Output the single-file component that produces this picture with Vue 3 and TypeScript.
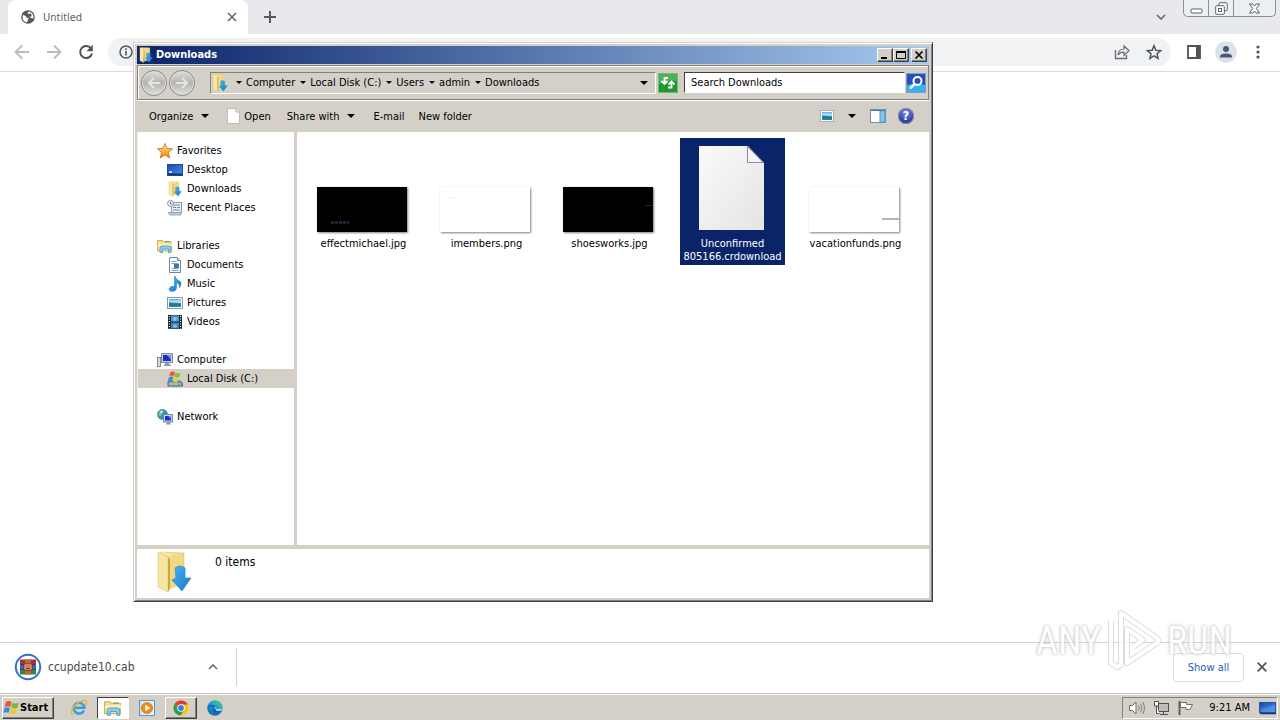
<script setup lang="ts">
interface NavItem { label: string; icon: string; active?: boolean }
interface NavGroup extends NavItem { children: NavItem[] }
interface FileItem { name: string; kind: 'dark-text' | 'light-text' | 'dark-mark' | 'document' | 'light-line'; selected?: boolean }

const crumbs: string[] = ['Computer', 'Local Disk (C:)', 'Users', 'admin', 'Downloads']

const groups: NavGroup[] = [
  {
    label: 'Favorites', icon: 'star',
    children: [
      { label: 'Desktop', icon: 'desktop' },
      { label: 'Downloads', icon: 'downloads' },
      { label: 'Recent Places', icon: 'recent' },
    ],
  },
  {
    label: 'Libraries', icon: 'libraries',
    children: [
      { label: 'Documents', icon: 'documents' },
      { label: 'Music', icon: 'music' },
      { label: 'Pictures', icon: 'pictures' },
      { label: 'Videos', icon: 'videos' },
    ],
  },
  { label: 'Computer', icon: 'computer', children: [{ label: 'Local Disk (C:)', icon: 'disk', active: true }] },
  { label: 'Network', icon: 'network', children: [] },
]

const files: FileItem[] = [
  { name: 'effectmichael.jpg', kind: 'dark-text' },
  { name: 'imembers.png', kind: 'light-text' },
  { name: 'shoesworks.jpg', kind: 'dark-mark' },
  { name: 'Unconfirmed 805166.crdownload', kind: 'document', selected: true },
  { name: 'vacationfunds.png', kind: 'light-line' },
]
</script>

<template>
  <div class="screen">
    <svg class="sprite" aria-hidden="true">
      <defs>
        <linearGradient id="gFold" x1="0" y1="0" x2="1" y2="1"><stop offset="0" stop-color="#fbf0b4" /><stop offset="1" stop-color="#e2bf58" /></linearGradient>
        <linearGradient id="gArrow" x1="0" y1="0" x2="1" y2="1"><stop offset="0" stop-color="#48b4f0" /><stop offset="1" stop-color="#1478c8" /></linearGradient>
        <linearGradient id="gScreen" x1="0" y1="0" x2="1" y2="1"><stop offset="0" stop-color="#1848b0" /><stop offset="1" stop-color="#4890e8" /></linearGradient>
        <linearGradient id="gStar" x1="0" y1="0" x2="0" y2="1"><stop offset="0" stop-color="#fff080" /><stop offset="1" stop-color="#f08010" /></linearGradient>
        <linearGradient id="gPage" x1="0" y1="0" x2="1" y2="1"><stop offset="0" stop-color="#fafafa" /><stop offset="1" stop-color="#e4e4e4" /></linearGradient>
        <linearGradient id="gSky" x1="0" y1="0" x2="0" y2="1"><stop offset="0" stop-color="#58b0e8" /><stop offset="0.4" stop-color="#d0ecf8" /><stop offset="0.6" stop-color="#187088" /><stop offset="1" stop-color="#40a0c0" /></linearGradient>
        <linearGradient id="gEdge" x1="0" y1="1" x2="1" y2="0"><stop offset="0" stop-color="#0c59a4" /><stop offset="0.5" stop-color="#1b9de2" /><stop offset="1" stop-color="#58d068" /></linearGradient>
      </defs>
      <symbol id="i-downloads" viewBox="0 0 36 42">
        <path d="M4 1 L28 2 V33 L14 37 Z" fill="url(#gFold)" stroke="#dcc06a" stroke-width=".6" />
        <path d="M14 5 L27 3 V33 L14 38Z" fill="#efd983" />
        <path d="M2 1 L12 6 V41 L2 36Z" fill="#f7e7a2" stroke="#dcc06a" stroke-width=".6" />
        <path d="M12 6 L14 8 V38 L12 41Z" fill="#c9a548" />
        <path d="M19 17 Q24 13 29 17 V27 H35 L26 40 L16 29 L20 27Z" fill="url(#gArrow)" stroke="#3b8fcc" stroke-width=".8" />
      </symbol>
      <symbol id="i-star" viewBox="0 0 16 16">
        <path d="M8 .5 L10 5.4 L15.6 5.8 L11.4 9.4 L12.8 15 L8 12 L3.2 15 L4.6 9.4 L.4 5.8 L6 5.4Z" fill="url(#gStar)" stroke="#d8761c" stroke-width=".9" />
      </symbol>
      <symbol id="i-desktop" viewBox="0 0 16 16">
        <rect x=".5" y="2.5" width="15" height="11" fill="url(#gScreen)" stroke="#20489c" /><rect x="1" y="11.5" width="14" height="1.6" fill="#183070" /><rect x="2" y="9" width="3" height="2" fill="#b8d8f8" />
      </symbol>
      <symbol id="i-recent" viewBox="0 0 16 16">
        <rect x="4.500" y="2.500" width="10" height="10" fill="#eef2f6" stroke="#8796a5" /><path d="M6 5h7M6 7.500h3m1 0h3M6 10h7" stroke="#5f88b0" /><circle cx="3.500" cy="3.500" r="3" fill="#eef3f7" stroke="#8794a0" /><path d="M3.500 2v2h1.500" stroke="#456" fill="none" stroke-width=".8" /><path d="M1 12.500h13v2.500H3z" fill="#c5ced6" stroke="#8896a3" stroke-width=".8" />
      </symbol>
      <symbol id="i-libraries" viewBox="0 0 16 16">
        <path d="M.5 2.500h5l1 1.500h8v9h-14z" fill="#f4df8d" stroke="#d2b254" /><path d="M1 5.500h14v3H1z" fill="#fbf1bd" /><path d="M8 3h5v1H8z" fill="#58b060" /><path d="M3 14.500V10q0-2 2-2h7q2 0 2 2v4.500h-2.500V11h-6v3.500z" fill="#8ed0f0" stroke="#4496cc" stroke-width=".8" />
      </symbol>
      <symbol id="i-documents" viewBox="0 0 16 16">
        <path d="M2.500.5h8l3 3v12h-11z" fill="#fff" stroke="#72869b" /><path d="M10.500.5v3h3" fill="#dbe4ed" stroke="#72869b" /><path d="M4.500 4.500h5M4.500 6.500h7M4.500 11.500h7M4.500 13.500h7" stroke="#7ca3c9" /><rect x="7" y="7" width="5" height="4" fill="#3b79b4" />
      </symbol>
      <symbol id="i-music" viewBox="0 0 16 16">
        <path d="M8 0 Q9 4 13.500 5.500 Q15 8 12.500 12 Q13 8 9.500 6.500 V12 Q9 15.500 5 15.500 Q1.500 15 2 12.500 Q3.500 9.500 7.500 10.500 V0Z" fill="url(#gArrow)" stroke="#2474b2" stroke-width=".5" />
      </symbol>
      <symbol id="i-pictures" viewBox="0 0 16 16">
        <rect x=".5" y="2.500" width="15" height="11" fill="#fff" stroke="#839db0" /><rect x="2" y="4" width="12" height="8" fill="url(#gSky)" /><path d="M2 7q6 0 12 3v2H2z" fill="#1f7c92" opacity=".6" />
      </symbol>
      <symbol id="i-videos" viewBox="0 0 16 16">
        <rect x="1" y="1" width="14" height="14" fill="#1e2930" /><rect x="4" y="1.500" width="8" height="6" fill="#4f94cd" /><rect x="4" y="8.500" width="8" height="6" fill="#3b82c0" /><path d="M2.500 2v13M13.500 2v13" stroke="#eee" stroke-width="1.200" stroke-dasharray="1 1.500" /><circle cx="8" cy="5" r="2" fill="#8bc3e9" /><circle cx="8" cy="12" r="2" fill="#80b8e1" />
      </symbol>
      <symbol id="i-computer" viewBox="0 0 16 16">
        <rect x="4.500" y="1.500" width="11" height="9" fill="#c8ccd6" stroke="#878ca0" /><rect x="6" y="3" width="8" height="6" fill="#1830c8" /><path d="M10 3h4v5z" fill="#6c8ef4" /><path d="M8 11h4v1.500h2V14H7v-1.500h1z" fill="#9298a8" /><rect x=".5" y="5.500" width="3" height="9" fill="#d8dae0" stroke="#858a96" />
      </symbol>
      <symbol id="i-disk" viewBox="0 0 16 16">
        <path d="M1 10h12l2.500 2v3H1z" fill="#829eaa" stroke="#536e79" /><path d="M2 13h9" stroke="#bfe5e2" /><rect x="12" y="12.500" width="2" height="1.500" fill="#65e073" /><path d="M3.500 1q3-1 4.500.5L6.500 5.500Q5 4 2 5z" fill="#ee5928" /><path d="M8.500 1.500q2 1.500 5 .500l-1.200 4q-3 1-5-.500z" fill="#7fc13c" /><path d="M2 6q2.500-1 4.300.3l-1.200 4q-2-1.500-4.300-.5z" fill="#348dd8" /><path d="M7 6.500q2 1.500 5 .500l-1.200 3.500q-3 1-5-.300z" fill="#fbc929" />
      </symbol>
      <symbol id="i-network" viewBox="0 0 16 16">
        <circle cx="5.500" cy="5.500" r="5" fill="#2e93bd" stroke="#1f6f8d" stroke-width=".6" /><path d="M2 3q3-3 5-1L5 5 3 8 1 6zM7 6l3-1-1 4z" fill="#6bc979" /><path d="M3 2l3 0-2 3z" fill="#d8f4ec" /><rect x="6.500" y="5.500" width="9" height="7.500" fill="#ccd3e4" stroke="#7e87a6" /><rect x="8" y="7" width="6" height="4.500" fill="#1a30cc" /><path d="M11 7h3v3z" fill="#6c8ef4" /><path d="M10 13h3l1 2.500H9z" fill="#8f96ac" />
      </symbol>
      <symbol id="i-monitor" viewBox="0 0 18 16">
        <rect x=".5" y="2.500" width="16" height="10" fill="url(#gScreen)" stroke="#2656a8" /><path d="M1 13.500h16" stroke="#183468" stroke-width="1.500" /><path d="M2 9l14-4v7H2z" fill="#5da2ee" opacity=".5" />
      </symbol>
    </svg>

    <header class="tabstrip">
      <div class="tab">
        <svg class="globe" viewBox="0 0 14 14"><circle cx="7" cy="7" r="6.800" fill="#54585c" /><path d="M2 5q2 0 3 1.500t2 1.500q1 .5 0 2T6 12.500Q1.500 11.500 1.500 7zM8 1.500q-2 1-1 2t2 0 1.500 1.500-1.500 1.500 1 1.500l2.500.5Q13 3 8 1.500z" fill="#fff" /></svg>
        <span class="tab-title">Untitled</span>
        <button class="plain" aria-label="Close tab"><svg width="10" height="10" viewBox="0 0 10 10"><path d="M1 1l8 8M9 1L1 9" stroke="#64686c" stroke-width="1.600" /></svg></button>
      </div>
      <button class="plain newtab" aria-label="New tab"><svg width="12" height="12" viewBox="0 0 12 12"><path d="M6 0v12M0 6h12" stroke="#54585c" stroke-width="2" /></svg></button>
      <button class="plain tabsearch" aria-label="Search tabs"><svg width="10" height="6" viewBox="0 0 10 6"><path d="M1 1l4 4 4-4" fill="none" stroke="#64686c" stroke-width="1.600" /></svg></button>
      <div class="caption">
        <button aria-label="Minimize"><svg width="13" height="13" viewBox="0 0 13 13"><rect x="1" y="7" width="11" height="4" rx="1" fill="#fff" stroke="#5a606a" /></svg></button>
        <button aria-label="Restore"><svg width="13" height="13" viewBox="0 0 13 13"><rect x="4" y=".7" width="8.200" height="8" rx="1" fill="#fff" stroke="#5a606a" /><rect x=".7" y="3.700" width="8.600" height="8.600" rx="1" fill="#fff" stroke="#5a606a" /><rect x="3.500" y="6.500" width="3" height="3" fill="none" stroke="#5a606a" /></svg></button>
        <button class="wide" aria-label="Close"><svg width="13" height="13" viewBox="0 0 13 13"><path d="M1.500 2h3.300L6.500 4l1.700-2h3.300L8.300 6.500l3.200 4.500H8.200L6.500 9l-1.700 2H1.500l3.200-4.500z" fill="#fff" stroke="#5a606a" /></svg></button>
      </div>
    </header>

    <nav class="toolbar">
      <button class="plain" aria-label="Back"><svg width="16" height="16" viewBox="0 0 16 16"><path d="M15 8H2M8 1.500L1.500 8 8 14.500" fill="none" stroke="#b9bcbf" stroke-width="1.800" /></svg></button>
      <button class="plain" aria-label="Forward"><svg width="16" height="16" viewBox="0 0 16 16"><path d="M1 8h13M8 1.500L14.500 8 8 14.500" fill="none" stroke="#b9bcbf" stroke-width="1.800" /></svg></button>
      <button class="plain" aria-label="Reload"><svg width="16" height="16" viewBox="0 0 16 16"><path d="M13 4.500A6 6 0 1 0 14 9.500" fill="none" stroke="#505458" stroke-width="2" /><path d="M14.800.8v6.400H8.400z" fill="#505458" /></svg></button>
      <div class="omnibox">
        <button class="plain" aria-label="Site information"><svg width="14" height="14" viewBox="0 0 14 14"><circle cx="7" cy="7" r="6" fill="none" stroke="#54585c" stroke-width="1.500" /><path d="M7 6v4.500M7 3.300v1.600" stroke="#54585c" stroke-width="1.600" /></svg></button>
        <span class="grow"></span>
        <button class="plain" aria-label="Share"><svg width="16" height="16" viewBox="0 0 16 16"><path d="M1.500 6v8.500h11V11" fill="none" stroke="#6a6e72" stroke-width="1.400" /><path d="M4 11q.5-6 6-6V2l5 4.800-5 4.500V8.200Q6 8 4 11z" fill="none" stroke="#6a6e72" stroke-width="1.200" /></svg></button>
        <button class="plain" aria-label="Bookmark"><svg width="16" height="16" viewBox="0 0 16 16"><path d="M8 1.700l1.800 4.500 4.800.4-3.600 3.100 1.100 4.700L8 11.900l-4.100 2.500L5 9.700 1.400 6.600l4.800-.4z" fill="none" stroke="#505458" stroke-width="1.500" /></svg></button>
      </div>
      <button class="plain" aria-label="Side panel"><svg width="14" height="14" viewBox="0 0 14 14"><path d="M1 1h12v12H1z" fill="#fff" stroke="#505458" stroke-width="1.800" /><path d="M9 1h4v12H9z" fill="#505458" /></svg></button>
      <button class="plain profile" aria-label="Profile"><svg width="22" height="22" viewBox="0 0 22 22"><circle cx="11" cy="11" r="10.800" fill="#dde2ea" /><circle cx="11" cy="8" r="3" fill="#485878" /><path d="M5 16.500v-1q0-3 6-3t6 3v1z" fill="#485878" /></svg></button>
      <button class="plain dots" aria-label="Menu"><svg width="4" height="14" viewBox="0 0 4 14"><g fill="#505458"><circle cx="2" cy="2" r="1.600" /><circle cx="2" cy="7" r="1.600" /><circle cx="2" cy="12" r="1.600" /></g></svg></button>
    </nav>

    <main class="page"></main>

    <section class="shelf">
      <button class="download">
        <svg width="28" height="28" viewBox="0 0 28 28"><circle cx="14" cy="14" r="12.200" fill="#fff" stroke="#2f6fd0" stroke-width="2" /><rect x="6" y="6.500" width="16" height="5" fill="#a83040" /><rect x="6" y="11.500" width="16" height="5" fill="#3468c0" /><rect x="6" y="16.500" width="16" height="5" fill="#2c8a48" /><path d="M6 11.500h16M6 16.500h16" stroke="#203040" stroke-width=".8" /><rect x="11" y="6.500" width="6" height="15" fill="#b86a2c" /><rect x="10" y="11" width="8" height="6" fill="#f4dfc0" stroke="#7a2a20" /><path d="M12 12v3.500h4V12M14 12v3" fill="none" stroke="#b02020" /></svg>
        <span>ccupdate10.cab</span>
      </button>
      <button class="plain chev" aria-label="Download options"><svg width="10" height="6" viewBox="0 0 10 6"><path d="M1 5l4-4 4 4" fill="none" stroke="#64686c" stroke-width="1.600" /></svg></button>
      <span class="grow"></span>
      <button class="showall">Show all</button>
      <button class="plain shelf-close" aria-label="Close downloads bar"><svg width="10" height="10" viewBox="0 0 10 10"><path d="M.7.7l8.600 8.600M9.300.7L.7 9.300" stroke="#54585c" stroke-width="1.800" /></svg></button>
    </section>

    <footer class="taskbar">
      <button class="start raised">
        <svg width="17" height="16" viewBox="0 0 17 16"><path d="M3 2q3-2 5.500 0L7.200 7Q5 5.500 1.800 6.800z" fill="#e8562a" /><path d="M9.500 2.500q3 1.800 6.500 0L14.600 7.500q-3 1.800-6.400 0z" fill="#7cb83c" /><path d="M1.500 8q3-1.500 5.500.3L5.700 13Q3 11.500.2 13z" fill="#3a8fdc" /><path d="M8 8.700q3 1.500 6.300 0L13 13.500q-3 1.700-6.300-.2z" fill="#f8c62c" /></svg>
        <span>Start</span>
      </button>
      <button class="task ie" aria-label="Internet Explorer"><svg width="18" height="18" viewBox="0 0 18 18"><path d="M14 11.500A5.400 5.400 0 1 1 14.500 8.800H5" fill="none" stroke="#3aa0e0" stroke-width="2.600" /><path d="M3 15.500Q-.5 15 3.500 8.500 9 1.500 15 1.300q3 .7.5 4.700" fill="none" stroke="#e9b53a" stroke-width="1.500" /></svg></button>
      <button class="task pressed" aria-label="Windows Explorer"><svg width="18" height="18"><use href="#i-libraries" /></svg></button>
      <button class="task" aria-label="Media Player"><svg width="16" height="16" viewBox="0 0 16 16"><rect x=".5" y=".5" width="15" height="15" fill="#c8e4f4" stroke="#5c98c4" /><rect x="3" y="1" width="12" height="14" fill="#e3f2fa" /><circle cx="8" cy="8" r="5.600" fill="#f38a12" stroke="#c86808" stroke-width=".6" /><path d="M6.300 4.800v6.400L11.300 8z" fill="#fff" /></svg></button>
      <button class="task raised" aria-label="Chrome"><svg width="16" height="16" viewBox="0 0 16 16"><circle cx="8" cy="8" r="7.600" fill="#f9c513" /><path d="M8 8L1.300 4.300A7.700 7.700 0 0 1 14.800 4.500H8z" fill="#e33b2e" /><path d="M8 8L1.400 4.200A7.700 7.700 0 0 0 7.500 15.600L11 9.800z" fill="#25a04c" /><circle cx="8" cy="8" r="3.800" fill="#fff" /><circle cx="8" cy="8" r="2.900" fill="#3b7cec" /></svg></button>
      <button class="task" aria-label="Edge"><svg width="16" height="16" viewBox="0 0 16 16"><circle cx="8" cy="8" r="7.800" fill="url(#gEdge)" /><path d="M.5 9Q1 4.500 5.500 5q4 .5 3.700 3.500-1.200.8.3 2 2 1 5-.2-2 4-5.500 4.800Q5 14.500 5.500 9.500 6 8 7 7.500 2.500 5.500.5 9z" fill="#1764b4" /><path d="M7 7.500q2.200-.7 2.200 1-1.200.8.3 2 3 1 6-1 .5-1-.3-.3H9.500z" fill="#d4eef4" /></svg></button>
      <span class="grow"></span>
      <div class="tray">
        <svg width="18" height="16" viewBox="0 0 18 16"><path d="M1.500 5.500h3L8 2v12l-3.500-3.500h-3z" fill="#fff" stroke="#6a6a6a" /><path d="M10.500 5.500q1.500 2.500 0 5M12.500 3.500q3 4.500 0 9M14.700 2q3.500 6 0 12" fill="none" stroke="#808080" /></svg>
        <svg width="17" height="16" viewBox="0 0 17 16"><rect x="5.500" y="3.500" width="10" height="8" fill="#bdbdbd" stroke="#505050" /><path d="M7 14.500h8M10.500 12v2" fill="none" stroke="#505050" /><path d="M1.500 1.500h4V6h-4zM3.500 6v7.500h3" fill="#fff" stroke="#505050" /></svg>
        <svg width="17" height="16" viewBox="0 0 17 16"><path d="M2.500 15V1" stroke="#606060" stroke-width="2" /><path d="M3.500 2.500h6v2h6l-2.500 5h-4v-2H3.500z" fill="#fff" stroke="#707070" /></svg>
        <time>9:21 AM</time>
        <svg width="18" height="16"><use href="#i-monitor" /></svg>
      </div>
    </footer>

    <section class="explorer" aria-label="Downloads window">
      <div class="titlebar">
        <svg width="16" height="16"><use href="#i-downloads" /></svg>
        <h1>Downloads</h1>
        <button aria-label="Minimize" class="raised"><svg width="10" height="8" viewBox="0 0 10 8"><path d="M1 7h6" stroke="#000" stroke-width="2" /></svg></button>
        <button aria-label="Maximize" class="raised"><svg width="10" height="8" viewBox="0 0 10 8"><path d="M.5 1h9" stroke="#000" stroke-width="2" /><path d="M.5 0v7.500h9V0" fill="none" stroke="#000" /></svg></button>
        <button aria-label="Close" class="raised last"><svg width="10" height="8" viewBox="0 0 10 8"><path d="M1.500.5l7 7M8.500.5l-7 7" stroke="#000" stroke-width="1.600" /></svg></button>
      </div>

      <div class="addressband">
        <button class="round" aria-label="Back"><svg width="14" height="12" viewBox="0 0 14 12"><path d="M13 6H2M7 1L2 6l5 5" fill="none" stroke="#e4e4e2" stroke-width="2" /></svg></button>
        <button class="round" aria-label="Forward"><svg width="14" height="12" viewBox="0 0 14 12"><path d="M1 6h11M7 1l5 5-5 5" fill="none" stroke="#e4e4e2" stroke-width="2" /></svg></button>
        <div class="address">
          <svg width="18" height="18"><use href="#i-downloads" /></svg>
          <template v-for="crumb in crumbs" :key="crumb">
            <i class="caret small"></i>
            <button class="crumb">{{ crumb }}</button>
          </template>
          <span class="grow"></span>
          <i class="caret"></i>
        </div>
        <button class="go" aria-label="Refresh"><svg width="20" height="20" viewBox="0 0 20 20"><rect x=".5" y=".5" width="19" height="19" fill="#23962f" stroke="#6fba78" /><path d="M1 1h18v7Q9 7 1 11z" fill="#78cc80" opacity=".5" /><path d="M10 5H6.500v5M3.500 8l3 3 3-3M10 14.500h3.500V9M10.500 11.500l3-3 3 3" fill="none" stroke="#fff" stroke-width="1.800" /></svg></button>
        <input class="search" type="text" aria-label="Search Downloads" placeholder="Search Downloads" />
        <button class="go" aria-label="Search"><svg width="20" height="20" viewBox="0 0 20 20"><rect x=".5" y=".5" width="19" height="19" fill="#2850b8" stroke="#7c9ccc" /><path d="M1 12q9-3 18 0v7H1z" fill="#3cb0ea" /><circle cx="11.500" cy="8" r="4" fill="none" stroke="#fff" stroke-width="2" /><path d="M8.500 11L4 15.500" stroke="#fff" stroke-width="2.400" /></svg></button>
      </div>

      <div class="commands">
        <button class="organize">Organize <i class="caret"></i></button>
        <button class="open"><svg width="13" height="16" viewBox="0 0 13 16"><path d="M.5.500h8.500l3.500 3.500v11.500H.500z" fill="#fff" stroke="#c0bdb8" /><path d="M9 .5V4h3.500" fill="#eee" stroke="#b0b0b0" /></svg>Open</button>
        <button class="share">Share with <i class="caret"></i></button>
        <button class="mail">E-mail</button>
        <button>New folder</button>
        <span class="grow"></span>
        <button class="view" aria-label="View"><svg width="14" height="12" viewBox="0 0 14 12"><rect x=".5" y=".5" width="13" height="11" fill="#fff" stroke="#9fb0c0" /><rect x="2" y="2" width="10" height="8" fill="url(#gSky)" /><path d="M2 5q5 0 10 3v2H2z" fill="#1f7c92" opacity=".6" /></svg></button>
        <button class="viewmore" aria-label="More view options"><i class="caret"></i></button>
        <button class="preview" aria-label="Preview pane"><svg width="16" height="14" viewBox="0 0 16 14"><rect x=".5" y=".5" width="15" height="13" fill="#fff" stroke="#6f8fac" /><path d="M1 1.500h14" stroke="#4878b0" /><rect x="10" y="2" width="5" height="11" fill="#82c6ea" stroke="#5a98c0" /></svg></button>
        <button class="help" aria-label="Help">?</button>
      </div>

      <div class="body">
        <nav class="tree">
          <ul v-for="g in groups" :key="g.label">
            <li><a href="#" class="head"><svg width="16" height="16"><use :href="'#i-' + g.icon" /></svg>{{ g.label }}</a></li>
            <li v-for="c in g.children" :key="c.label"><a href="#" class="leaf" :class="{ active: c.active }"><svg width="16" height="16"><use :href="'#i-' + c.icon" /></svg>{{ c.label }}</a></li>
          </ul>
        </nav>
        <div class="files">
          <button v-for="f in files" :key="f.name" class="file" :class="{ selected: f.selected }">
            <span class="thumb">
              <svg v-if="f.kind === 'document'" width="65" height="84" viewBox="0 0 65 84"><path d="M0 0h49l16 17v67H0z" fill="url(#gPage)" /><path d="M48.500.5V16.500H64z" fill="#f4f4f6" stroke="#8c8ca4" /></svg>
              <svg v-else class="shot" :class="{ light: f.kind.startsWith('light') }" width="90" height="45" viewBox="0 0 90 45">
                <path v-if="f.kind === 'dark-text'" d="M14 35.500h18" stroke="#34344e" stroke-width="2" stroke-dasharray="3 1" />
                <path v-if="f.kind === 'light-text'" d="M8 10.500h10" stroke="#f2f2f2" />
                <path v-if="f.kind === 'dark-mark'" d="M82 18.500h8" stroke="#401418" />
                <path v-if="f.kind === 'light-line'" d="M73 32h17" stroke="#b4b4c4" stroke-width="2" />
              </svg>
            </span>
            <span class="name">{{ f.name }}</span>
          </button>
        </div>
      </div>

      <div class="details">
        <svg width="36" height="42"><use href="#i-downloads" /></svg>
        <span>0 items</span>
      </div>
    </section>

    <div class="watermark" aria-hidden="true">
      <span>ANY</span>
      <svg width="58" height="64" viewBox="0 0 58 64"><g fill="none" stroke-linejoin="round"><path d="M6 12v42l6 4 4-2V4L52 29q3 3 0 5L22 54V20l16 11-10 7" stroke="#d4d4d4" stroke-width="6" /><path d="M6 12v42l6 4 4-2V4L52 29q3 3 0 5L22 54V20l16 11-10 7" stroke="#fff" stroke-width="4" /></g></svg>
      <span>RUN</span>
    </div>
  </div>
</template>

<style>
html, body { margin: 0; }
</style>

<style scoped>
.screen {
  position: relative;
  display: flex;
  flex-direction: column;
  min-height: 100vh;
  overflow: hidden;
  background: #fff;
  color: #000;
  font-family: "DejaVu Sans Condensed", "DejaVu Sans", sans-serif;
  font-size: 11px;
  line-height: 13px;
}
.sprite { position: absolute; width: 0; height: 0; }
svg { display: block; flex: none; }
button, input { font: inherit; color: inherit; }
button { display: flex; align-items: center; justify-content: center; margin: 0; padding: 0; border: 0; background: none; flex: none; white-space: nowrap; }
.grow { flex: 1; }

.tabstrip { display: flex; align-items: center; height: 34px; background: #e7e9ec; }
.tab { display: flex; align-items: center; align-self: stretch; width: 216px; margin-left: 8px; padding: 0 11px 0 13px; border-radius: 8px 8px 0 0; background: #fff; color: #5f6368; }
.globe { width: 14px; height: 14px; }
.tab-title { flex: 1; margin-left: 8px; }
.newtab { margin-left: 16px; }
.tabsearch { margin-left: auto; margin-right: 17px; }
.caption { display: flex; align-self: flex-start; height: 17px; margin-right: 4px; border: 1px solid #8b8f96; border-top: 0; border-radius: 0 0 5px 5px; box-sizing: border-box; background: #eceef0; }
.caption button { width: 25px; border-right: 1px solid #8b8f96; }
.caption .wide { width: 41px; border: 0; }

.toolbar { display: flex; align-items: center; gap: 16px; height: 35px; padding: 0 20px 2px 14px; border-bottom: 1px solid #dadce0; }
.omnibox { display: flex; flex: 1; align-items: center; gap: 16px; height: 28px; margin-left: -2px; padding: 0 9px 0 11px; border-radius: 14px; background: #f0f2f4; }
.profile { margin-left: -2px; }
.dots { margin-left: 3px; }
.page { flex: 1; }

.shelf { display: flex; align-items: center; height: 48px; padding-bottom: 2px; border-top: 1px solid #d5d5d5; }
.download { gap: 6px; margin-left: 14px; color: #46494d; font-size: 12px; }
.chev { width: 48px; height: 38px; margin-left: 55px; border-right: 1px solid #d0d0d0; }
.showall { width: 71px; height: 29px; border: 1px solid #dadce0; border-radius: 4px; color: #1a5fb8; }
.shelf-close { margin: 0 13px; }

.taskbar { display: flex; align-items: center; height: 25px; padding: 1px 2px 0; border-top: 1px solid #c4c0b8; box-shadow: inset 0 1px #fff; background: #d4d0c8; }
.raised { border: 1px solid; border-color: #fff #404040 #404040 #fff; box-shadow: inset -1px -1px #808080; background: #d4d0c8; }
.start { justify-content: flex-start; width: 52px; height: 22px; font-weight: bold; }
.task { width: 32px; height: 22px; margin-left: 2px; }
.ie { margin-left: 9px; }
.pressed { border: 1px solid; border-color: #404040 #fff #fff #404040; background: #fff; }
.tray { display: flex; align-items: center; gap: 7px; height: 20px; padding: 0 0 0 5px; border: 1px solid; border-color: #808080 #fff #fff #808080; }
.tray time { margin: 0 2px 0 8px; }

.explorer {
  position: absolute;
  left: 133px;
  top: 42px;
  display: flex;
  flex-direction: column;
  width: 800px;
  height: 560px;
  box-sizing: border-box;
  padding: 2px;
  border: 1px solid;
  border-color: #d4d0c8 #404040 #404040 #d4d0c8;
  box-shadow: inset 1px 1px #fff, inset -1px -1px #808080;
  background: #d4d0c8;
}
.titlebar { display: flex; align-items: center; height: 18px; margin: 1px 1px 0; padding: 0 2px 0 1px; background: linear-gradient(90deg, #0a246a, #a6caf0); }
.titlebar h1 { flex: 1; margin: 0 0 0 2px; color: #fff; font-size: 11px; font-weight: bold; line-height: 18px; }
.titlebar button { width: 16px; height: 14px; box-sizing: border-box; }
.titlebar .last { margin-left: 2px; }

.addressband { display: flex; align-items: center; height: 33px; margin: 1px 1px 0; border: 1px solid #808080; box-shadow: inset 1px 1px #fff, 0 1px #fff; padding: 0 2px 0 3px; }
.round { width: 26px; height: 26px; margin-right: 2px; border: 1px solid #8a8a8a; border-radius: 50%; background: linear-gradient(#dededa, #b4b4b0 50%, #dededc); box-shadow: inset 0 0 0 1px #e4e4e0; }
.address { display: flex; flex: 1; align-items: center; height: 20px; margin-left: 13px; padding: 0 3px 0 0; border: 1px solid; border-color: #808080 #fff #fff #808080; }
.crumb { line-height: 18px; }
.caret { display: flex; align-items: center; justify-content: center; width: 17px; }
.caret::before { content: ""; border: 4px solid transparent; border-top-color: #000; border-bottom: 0; }
.caret.small { width: 15px; }
.caret.small::before { border-width: 3px 3px 0; }
.address > .caret.small:first-of-type { margin-left: 2px; }
.go { margin-left: 2px; }
.search { width: 221px; height: 21px; box-sizing: border-box; margin: 0 0 0 6px; padding: 0 6px; border: 1px solid; border-color: #404040 #fff #fff #404040; border-radius: 0; background: #fff; outline: 0; }
.search::placeholder { color: #000; opacity: 1; }
.search + .go { margin-left: 1px; }

.commands { display: flex; align-items: center; height: 32px; margin: 0 1px; padding: 0 15px 0 12px; }
.commands .caret { width: 9px; margin-left: 7px; }
.commands .open { gap: 4px; margin-left: 18px; }
.commands .share { margin-left: 16px; }
.commands .mail { margin: 0 14px 0 18px; }
.commands .viewmore { margin: 0 14px 0 6px; }
.help { width: 16px; height: 16px; margin-left: 12px; border-radius: 50%; background: radial-gradient(circle at 50% 30%, #7890e0, #203098 75%); box-shadow: 0 0 0 1px #8890b0 inset; color: #fff; font-size: 12px; font-weight: bold; }

.body { display: flex; flex: 1; min-height: 0; margin: 0 1px; }
.tree { width: 157px; padding-top: 9px; box-sizing: border-box; border-left: 1px solid #f0eeea; background: #fff; }
.tree ul { margin: 0 0 19px; padding: 0; list-style: none; }
.tree a { display: flex; align-items: center; gap: 4px; height: 19px; color: #000; text-decoration: none; }
.head { padding-left: 19px; }
.leaf { padding-left: 29px; }
.leaf.active { background: #d4d0c8; }
.files { display: flex; flex: 1; flex-wrap: wrap; align-content: flex-start; align-items: flex-start; gap: 18px; margin-left: 3px; padding: 6px 0 0 14px; background: #fff; }
.file { flex-direction: column; width: 105px; padding-bottom: 2px; }
.file.selected { background: #0a246a; color: #fff; }
.thumb { display: flex; align-items: flex-end; height: 94px; padding: 0 3px 5px 0; }
.selected .thumb { height: 92px; padding-bottom: 7px; }
.shot { background: #000; box-shadow: 1px 1px 2px #808080; }
.shot.light { background: #fff; }
.name { max-width: 105px; white-space: normal; }

.details { display: flex; height: 47px; margin: 4px 1px 1px; padding: 2px 0 0 19px; background: #fff; font-size: 12px; }
.details span { margin: 5px 0 0 23px; }

.watermark { position: absolute; right: 48px; bottom: 47px; display: flex; align-items: center; gap: 4px; color: #fff; font-family: "Roboto Condensed", "Open Sans Condensed", "Noto Sans Condensed", "Roboto", sans-serif; font-size: 38px; line-height: 44px; text-shadow: 0 0 2px #a8a8a8, 0 0 4px #c8c8c8; opacity: .8; pointer-events: none; }
</style>
